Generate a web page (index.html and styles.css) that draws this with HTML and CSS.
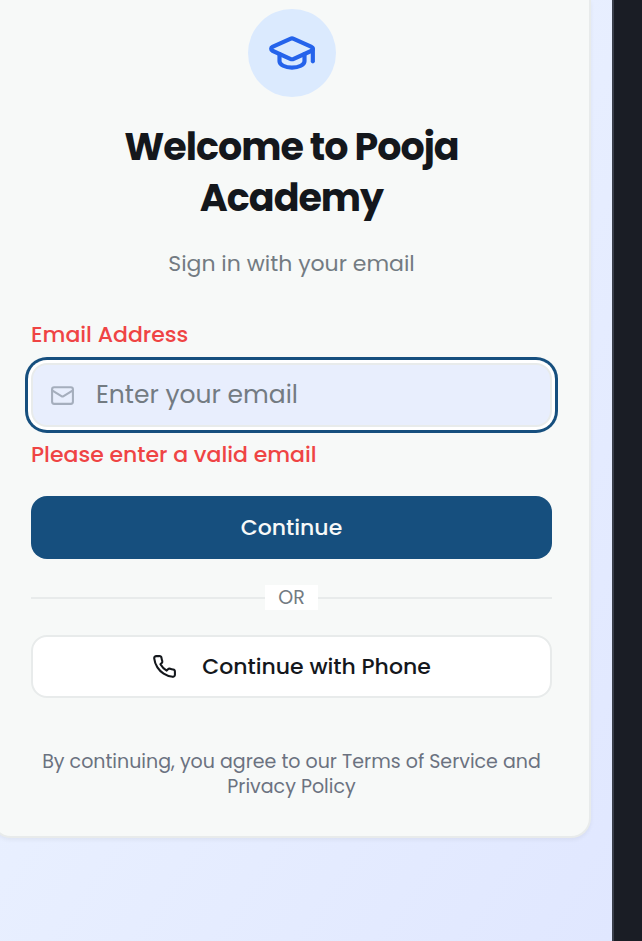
FILE: index.html
```html
<!DOCTYPE html>
<html lang="en">
<head>
<meta charset="utf-8">
<meta name="viewport" content="width=device-width, initial-scale=1">
<title>Sign in – Pooja Academy</title>
<link rel="stylesheet" href="styles.css">
</head>
<body>
<main class="page">
  <section class="card">
    <div class="badge">
      <svg class="badge-icon" viewBox="0 0 24 24" fill="none" stroke="currentColor" stroke-width="2" stroke-linecap="round" stroke-linejoin="round" aria-hidden="true">
        <path d="M21.42 10.922a1 1 0 0 0-.019-1.838L12.83 5.18a2 2 0 0 0-1.66 0L2.6 9.08a1 1 0 0 0 0 1.832l8.57 3.908a2 2 0 0 0 1.66 0z"/>
        <path d="M22 10v6"/>
        <path d="M6 12.5V16c0 1.657 2.686 3 6 3s6-1.343 6-3v-3.5"/>
      </svg>
    </div>
    <h1 class="title">Welcome to Pooja<br>Academy</h1>
    <p class="subtitle">Sign in with your email</p>
    <form class="form" novalidate>
      <label class="label" for="email">Email Address</label>
      <div class="field">
        <svg class="field-icon" viewBox="0 0 24 24" fill="none" stroke="currentColor" stroke-width="2" stroke-linecap="round" stroke-linejoin="round" aria-hidden="true">
          <rect x="2" y="4" width="20" height="16" rx="2"/>
          <path d="m22 7-8.97 5.7a1.94 1.94 0 0 1-2.06 0L2 7"/>
        </svg>
        <input class="input" id="email" type="email" placeholder="Enter your email" aria-describedby="email-error" aria-invalid="true">
      </div>
      <p class="error" id="email-error">Please enter a valid email</p>
      <button class="button primary" type="submit">Continue</button>
      <div class="divider"><span class="divider-text">OR</span></div>
      <button class="button outline" type="button">
        <svg class="button-icon" viewBox="0 0 24 24" fill="none" stroke="currentColor" stroke-width="2" stroke-linecap="round" stroke-linejoin="round" aria-hidden="true">
          <path d="M22 16.92v3a2 2 0 0 1-2.18 2 19.79 19.79 0 0 1-8.63-3.07 19.5 19.5 0 0 1-6-6 19.79 19.79 0 0 1-3.07-8.67A2 2 0 0 1 4.11 2h3a2 2 0 0 1 2 1.72 12.84 12.84 0 0 0 .7 2.81 2 2 0 0 1-.45 2.11L8.09 9.91a16 16 0 0 0 6 6l1.27-1.27a2 2 0 0 1 2.11-.45 12.84 12.84 0 0 0 2.81.7A2 2 0 0 1 22 16.92z"/>
        </svg>
        Continue with Phone
      </button>
    </form>
    <p class="terms">By continuing, you agree to our Terms of Service and<br>Privacy Policy</p>
  </section>
</main>
<aside class="rail"></aside>
</body>
</html>
```
FILE: styles.css
```css
* {
  box-sizing: border-box;
}

body {
  margin: 0;
  min-height: 100vh;
  display: flex;
  overflow-x: hidden;
  font-family: Poppins, Inter, "Liberation Sans", sans-serif;
  color: #14171c;
  background: #e0e7ff;
}

.page {
  flex: 1;
  min-width: 0;
  padding-right: 21px;
  background: linear-gradient(to bottom right, #eff6ff, #e0e7ff);
}

.rail {
  width: 30px;
  border-left: 2px solid #3a3f4b;
  background: #1a1d25;
}

.card {
  margin-left: -9px;
  padding: 9px 37px 37px 38px;
  border: 2px solid #e8ebeb;
  border-top: 0;
  border-radius: 0 0 20px 20px;
  background: #f7f9f8;
  box-shadow: 0 2px 4px rgba(0, 0, 0, 0.05);
}

.badge {
  display: flex;
  align-items: center;
  justify-content: center;
  width: 88px;
  height: 88px;
  margin: 0 auto 24px;
  border-radius: 50%;
  color: #2563eb;
  background: #dbeafe;
}

.badge-icon {
  width: 50px;
  height: 50px;
}

.title {
  margin: 0 0 24px;
  font-size: 38px;
  line-height: 51px;
  font-weight: 700;
  letter-spacing: -1px;
  text-align: center;
}

.subtitle {
  margin: 0 0 38px;
  font-size: 22px;
  line-height: 33px;
  color: #737b82;
  text-align: center;
}

.form {
  display: flex;
  flex-direction: column;
}

.label,
.error {
  margin: 0;
  font-size: 22px;
  line-height: 33px;
  font-weight: 500;
  color: #ef4444;
}

.field {
  display: flex;
  align-items: center;
  gap: 21px;
  height: 64px;
  margin: 12px 0 11px;
  padding: 0 17px;
  border: 2px solid #e8ebeb;
  border-radius: 16px;
  background: #e8eefd;
  box-shadow: 0 0 0 3px #ffffff, 0 0 0 6px #164f7e;
}

.field-icon {
  flex: none;
  width: 25px;
  height: 25px;
  color: #a5aebd;
}

.input {
  flex: 1;
  min-width: 0;
  padding: 0;
  border: 0;
  outline: 0;
  font: inherit;
  font-size: 25px;
  color: inherit;
  background: transparent;
}

.input::placeholder {
  color: #737b82;
  opacity: 1;
}

.button {
  display: flex;
  align-items: center;
  justify-content: center;
  gap: 25px;
  height: 63px;
  border: 0;
  border-radius: 16px;
  font: inherit;
  font-size: 22px;
  font-weight: 500;
  cursor: pointer;
}

.primary {
  margin-top: 25px;
  color: #f7f9f8;
  background: #164f7e;
}

.outline {
  border: 2px solid #e8ebeb;
  color: #14171c;
  background: #ffffff;
}

.button-icon {
  width: 25px;
  height: 25px;
}

.divider {
  display: flex;
  align-items: center;
  margin: 26px 0 25px;
}

.divider::before,
.divider::after {
  content: "";
  flex: 1;
  height: 2px;
  background: #e8ebeb;
}

.divider-text {
  padding: 0 13px;
  font-size: 19px;
  line-height: 25px;
  color: #737b82;
  background: #ffffff;
}

.terms {
  margin: 51px 0 0;
  font-size: 19px;
  line-height: 25px;
  color: #6b7280;
  text-align: center;
}
```
